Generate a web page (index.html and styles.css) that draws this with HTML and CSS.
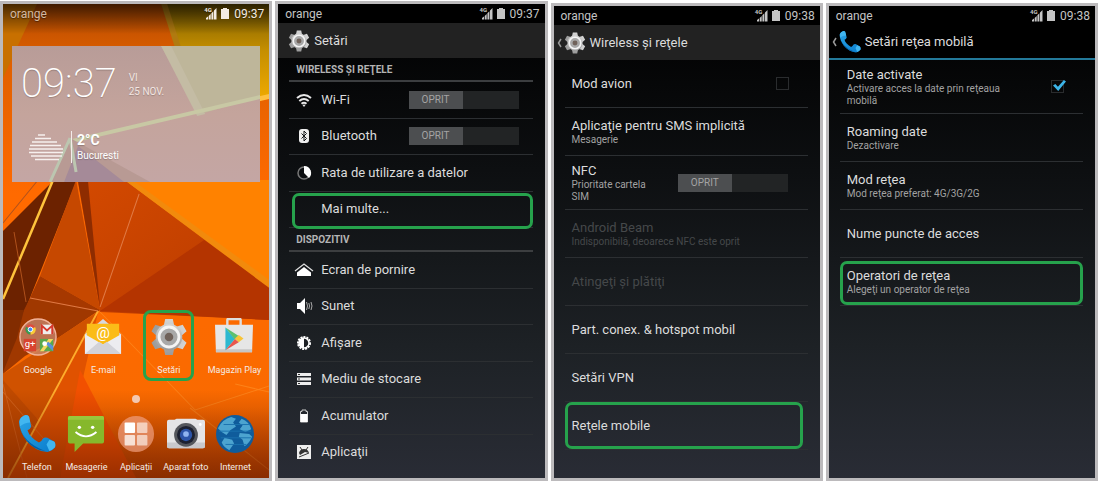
FILE: index.html
```html
<!DOCTYPE html>
<html lang="ro">
<head>
    <meta charset="UTF-8">
    <meta name="viewport" content="width=device-width, initial-scale=1.0">
    <title>Setări rețea mobilă</title>
    <link rel="stylesheet" href="styles.css">
</head>
<body>
    <!-- shared icons -->
    <svg class="defs" aria-hidden="true">
        <defs>
            <linearGradient id="metal" x1="0" y1="0" x2="0" y2="1">
                <stop offset="0" stop-color="#d4d4d4"/>
                <stop offset="1" stop-color="#9a9a9a"/>
            </linearGradient>
            <linearGradient id="blue" x1="0" y1="0" x2="1" y2="1">
                <stop offset="0" stop-color="#2ba4e6"/>
                <stop offset="1" stop-color="#0a7ccc"/>
            </linearGradient>
        </defs>
        <symbol id="signal" viewBox="0 0 13 13">
            <path d="M2 12.500V11L4 9.500v3zM4.700 12.500V9L6.700 7v5.500zM7.400 12.500V6.200l2-2v8.300zM10 12.500V3.600L12.500 1v11.500z" fill="currentColor"/>
        </symbol>
        <symbol id="battery" viewBox="0 0 8 11">
            <path d="M2 0h4v1h2v10H0V1h2z" fill="currentColor"/>
        </symbol>
        <symbol id="gear" viewBox="0 0 40 40">
            <g fill="url(#metal)">
                <path d="M14.500 8L16 1h8l1.500 7zM14.500 32l1.500 7h8l1.500-7z"/>
                <path d="M14.500 8L16 1h8l1.500 7zM14.500 32l1.500 7h8l1.500-7z" transform="rotate(60 20 20)"/>
                <path d="M14.500 8L16 1h8l1.500 7zM14.500 32l1.500 7h8l1.500-7z" transform="rotate(120 20 20)"/>
                <circle cx="20" cy="20" r="14"/>
            </g>
            <circle cx="20" cy="20" r="10.500" fill="#a8a8a8" stroke="#f4f4f4" stroke-width="3"/>
            <circle cx="20" cy="20" r="4.500" fill="#70625a"/>
        </symbol>
        <symbol id="phone" viewBox="0 0 40 40">
            <path d="M1 7Q2 2 8 0q4 0 4 4l2 8q-1 3-4 4 2 7 12 13 3-1 4-4 2-2 5-1l7 4q2 2 1 6-3 4-8 5Q18 38 9 27 2 18 1 7z" fill="url(#blue)"/>
            <path d="M2 5q2-4 6-5 4 0 4 4l1 4Q7 8 2 12zM38 28q2 2 1 6-3 3-6 4l-3-7 3-5z" fill="#42b6f0"/>
            <path d="M1 9q3 20 28 29-12-1-20-11Q2 18 1 9z" fill="#0560a8"/>
        </symbol>
        <symbol id="back" viewBox="0 0 5 10">
            <path d="M4 1L1.500 5 4 9" fill="none" stroke="#999" stroke-width="1.500"/>
        </symbol>
    </svg>

    <main class="phones">
        <section class="phone home">
            <svg class="wallpaper" viewBox="3 4 266 474" preserveAspectRatio="none" aria-hidden="true">
                <defs>
                    <linearGradient id="base" x1="0" y1="0" x2="0" y2="1">
                        <stop offset="0" stop-color="#b44a00"/>
                        <stop offset="0.120" stop-color="#e06000"/>
                        <stop offset="0.400" stop-color="#ff6a00"/>
                        <stop offset="0.850" stop-color="#fa6a00"/>
                        <stop offset="1" stop-color="#c44a00"/>
                    </linearGradient>
                    <linearGradient id="yellow" x1="0" y1="0" x2="0" y2="1">
                        <stop offset="0" stop-color="#7a5c00"/>
                        <stop offset="0.400" stop-color="#c48e00"/>
                        <stop offset="1" stop-color="#ffb400"/>
                    </linearGradient>
                    <linearGradient id="rust" x1="0" y1="0" x2="1" y2="1">
                        <stop offset="0" stop-color="#d44a00"/>
                        <stop offset="1" stop-color="#b83a00"/>
                    </linearGradient>
                    <linearGradient id="shade" x1="0" y1="0" x2="0" y2="1">
                        <stop offset="0" stop-color="#000" stop-opacity="0.650"/>
                        <stop offset="1" stop-color="#000" stop-opacity="0"/>
                    </linearGradient>
                    <linearGradient id="foot" x1="0" y1="0" x2="0" y2="1">
                        <stop offset="0" stop-color="#6a1c00" stop-opacity="0"/>
                        <stop offset="1" stop-color="#6a1c00" stop-opacity="0.650"/>
                    </linearGradient>
                </defs>
                <rect x="3" y="4" width="266" height="474" fill="url(#base)"/>
                <path d="M3 4h34L3 78z" fill="#c87000"/>
                <path d="M161 4h108v92l-69 22z" fill="url(#yellow)"/>
                <path d="M161 4l6 0 36 112-6 2z" fill="#b07a10"/>
                <path d="M269 94v5L66 146v-4z" fill="#ffc040"/>
                <path d="M100 180h169v110z" fill="#ff8200"/>
                <!-- dark facets -->
                <path d="M3 231L50 184 78 165 76 182 22 318H3z" fill="#6c2200"/>
                <path d="M76 170l50 11 143 106v33L100 312z" fill="url(#rust)"/>
                <path d="M204 240l65 47v33L100 311z" fill="#b43400"/>
                <path d="M76 180L40 276l60 34z" fill="#c64800"/>
                <path d="M40 276l60 34-3 2-67-14z" fill="#a63800"/>
                <path d="M77 176l11 6 12 126z" fill="#8e2c00"/>
                <path d="M123 179l8 0 138 101v8z" fill="#f28a0c"/>
                <path d="M30 298l68 13-43 29-30 16-22 18v-60l20-2z" fill="#a03800"/>
                <path d="M3 310l21 0-7 28-14 34z" fill="#822c00"/>
                <path d="M97 312L3 374v40l44 6z" fill="#d05200"/>
                <path d="M3 380l37 42-22 38L3 478z" fill="#c04a00"/>
                <path d="M98 312L60 478H8z" fill="#e05200"/>
                <path d="M80 370l56 108H60z" fill="#f25000"/>
                <g fill="none">
                    <path d="M53 180L3 299" stroke="#ffc43c" stroke-width="2.500"/>
                    <path d="M98 311L8 478" stroke="#ffad2c" stroke-width="1.800"/>
                    <path d="M139 194l-39 113M30 298l68 13" stroke="#e07a44"/>
                    <path d="M38 180L3 223M14 232l12 70" stroke="#b0521c"/>
                    <path d="M100 312l95 98 74-24M190 408l79 62M235 384l34 8" stroke="#ff9a30" stroke-opacity="0.500"/>
                    <path d="M3 384l24 94M3 392l40 46" stroke="#e27a34" stroke-opacity="0.500"/>
                </g>
                <rect x="3" y="4" width="266" height="30" fill="url(#shade)"/>
                <rect x="3" y="390" width="266" height="88" fill="url(#foot)"/>
            </svg>

            <div class="status">
                <span class="carrier">orange</span>
                <span class="network"><svg class="signal"><use href="#signal"/></svg><span>4G</span></span>
                <svg class="battery"><use href="#battery"/></svg>
                <span>09:37</span>
            </div>

            <div class="widget">
                <svg class="facets" viewBox="0 0 248 136" preserveAspectRatio="none" aria-hidden="true">
                    <path d="M149 0h99v51l-60 17z" fill="#beb69a"/>
                    <path d="M149 0l10 0 34 68-8 2z" fill="#c4bca4"/>
                    <path d="M248 49v4L60 97v-4z" fill="#c8c8a4"/>
                    <path d="M58 92l80 44H38z" fill="#b89a94"/>
                    <path d="M66 100l46 36H52z" fill="#a58a98"/>
                    <path d="M58 92L38 136M58 92l6 34" stroke="#bcc6b0" stroke-width="3" fill="none"/>
                </svg>
                <div class="clock">
                    <span class="time">09:37</span>
                    <span class="date">VI<br>25 NOV.</span>
                </div>
                <div class="weather">
                    <svg class="cloud" viewBox="0 0 34 28" aria-hidden="true">
                        <path d="M9 2h7M6 5.500h16M3 9h25M1 12.500h31M0 16h34M0 19.500h34M2 23h31M6 26.500h24" stroke="#f6f0ee" stroke-width="1.500"/>
                    </svg>
                    <div class="place"><strong>2°C</strong><span>Bucuresti</span></div>
                </div>
            </div>

            <div class="apps">
                <button class="app">
                    <svg viewBox="0 0 40 40">
                        <circle cx="20" cy="20" r="19" fill="#c98c74" fill-opacity="0.700" stroke="#f2b298" stroke-width="1.500"/>
                        <circle cx="12" cy="12" r="5.500" fill="#e04a3c"/>
                        <path d="M12 12l5-2.500a5.500 5.500 0 0 1-5 8z" fill="#f8cc38"/>
                        <path d="M12 12v5.500a5.500 5.500 0 0 1-4.500-8.500z" fill="#3c9c50"/>
                        <circle cx="12" cy="12" r="2.400" fill="#4285f4" stroke="#fff"/>
                        <path d="M23 7h13v10H23z" fill="#eee"/>
                        <path d="M24 17V8l5.500 5L35 8v9" fill="none" stroke="#d8382c" stroke-width="2"/>
                        <path d="M5 22h13v13H5z" fill="#d8432f"/>
                        <text x="6" y="31" font-size="10" fill="#fff">g+</text>
                        <path d="M22 22h14v13H22z" fill="#58a84c"/>
                        <path d="M22 35l9-13h5L26 35z" fill="#f4d860"/>
                        <path d="M28 27l8 8v-5l-5-5z" fill="#5a90d8"/>
                        <circle cx="27" cy="27" r="2.500" fill="#fff"/>
                    </svg>
                    <span>Google</span>
                </button>
                <button class="app">
                    <svg viewBox="0 0 40 40">
                        <path d="M1 17L20 1l19 16v21H1z" fill="#d8d8dc"/>
                        <path d="M3 6h34v18L20 32 3 24z" fill="#fbbc18"/>
                        <text x="20" y="21" font-size="16" font-weight="400" text-anchor="middle" fill="#fff">@</text>
                        <path d="M1 17l19 11 19-11v21H1z" fill="#ececf0"/>
                        <path d="M1 38l15-13 4 3 4-3 15 13z" fill="#d2d2d8"/>
                    </svg>
                    <span>E-mail</span>
                </button>
                <button class="app marked">
                    <svg viewBox="0 0 40 40"><use href="#gear"/></svg>
                    <span>Setări</span>
                </button>
                <button class="app">
                    <svg viewBox="0 0 40 40">
                        <path d="M13 8V2q0-1 1-1h12q1 0 1 1v6" fill="none" stroke="#dedede" stroke-width="2.500"/>
                        <path d="M0 7h40l-1 29H1z" fill="#e6e6e6"/>
                        <path d="M1 33h38v3H1z" fill="#c6c6c6"/>
                        <path d="M11 10v24l10-12z" fill="#2cb8d0"/>
                        <path d="M11 10l14 9-4 4z" fill="#5cc070"/>
                        <path d="M25 18l5 3.500-5 4-4-4z" fill="#f8c438"/>
                        <path d="M11 34l10-12 4 3.500z" fill="#e8564c"/>
                    </svg>
                    <span>Magazin Play</span>
                </button>
            </div>

            <div class="page-dot"></div>

            <div class="apps dock">
                <button class="app">
                    <svg viewBox="0 0 40 40"><use href="#phone"/></svg>
                    <span>Telefon</span>
                </button>
                <button class="app">
                    <svg viewBox="0 0 40 40">
                        <path d="M3 1h34q2 0 2 2v25q0 2-2 2H17L8 39V30H3q-2 0-2-2V3q0-2 2-2z" fill="#86b82c"/>
                        <path d="M3 1h34q2 0 2 2v2H1V3q0-2 2-2z" fill="#98c83c"/>
                        <circle cx="13" cy="13" r="1.800" fill="#fff"/>
                        <circle cx="27" cy="13" r="1.800" fill="#fff"/>
                        <path d="M9 18q11 9 22 0" fill="none" stroke="#fff" stroke-width="2"/>
                    </svg>
                    <span>Mesagerie</span>
                </button>
                <button class="app">
                    <svg viewBox="0 0 40 40">
                        <circle cx="20" cy="20" r="19" fill="#f0a080" fill-opacity="0.700"/>
                        <rect x="8" y="8" width="11" height="11" rx="1" fill="#fff"/>
                        <rect x="21" y="8" width="11" height="11" rx="1" fill="#fff" fill-opacity="0.600"/>
                        <rect x="8" y="21" width="11" height="11" rx="1" fill="#fff" fill-opacity="0.750"/>
                        <rect x="21" y="21" width="11" height="11" rx="1" fill="#fff" fill-opacity="0.600"/>
                    </svg>
                    <span>Aplicații</span>
                </button>
                <button class="app">
                    <svg viewBox="0 0 40 40">
                        <path d="M2 5h6l2-1h20l2 1h6q2 0 2 2v26q0 2-2 2H2q-2 0-2-2V7q0-2 2-2z" fill="#e4e4e6"/>
                        <path d="M0 29h40v4q0 2-2 2H2q-2 0-2-2z" fill="#c8c8cc"/>
                        <circle cx="20" cy="21" r="12.500" fill="#54565c"/>
                        <circle cx="20" cy="21" r="9.500" fill="#1c2030"/>
                        <circle cx="20" cy="21" r="6.500" fill="#2c54a8"/>
                        <circle cx="20" cy="20" r="3" fill="#90b4f0"/>
                        <circle cx="35" cy="10" r="1.500" fill="#fff"/>
                    </svg>
                    <span>Aparat foto</span>
                </button>
                <button class="app">
                    <svg viewBox="0 0 40 40">
                        <circle cx="20" cy="20" r="20" fill="#0f5c9c"/>
                        <path d="M2 14Q7 4 16 2l5 2-3 4 3 4-6 4-4 5-5-3zM27 4q8 3 10 11l-6 3-6-3 3-4-4-3zM9 24l8 2 2 4-5 7Q8 34 6 29zM25 19l10 1 3 3q-3 7-8 10l-2-7-4-3z" fill="#4ca4d0"/>
                        <path d="M3 17h34M5 24h32M8 10h28M10 31h22" stroke="#1a72ae" stroke-width="1"/>
                    </svg>
                    <span>Internet</span>
                </button>
            </div>
        </section>

        <section class="phone">
            <div class="status">
                <span class="carrier">orange</span>
                <span class="network"><svg class="signal"><use href="#signal"/></svg><span>4G</span></span>
                <svg class="battery"><use href="#battery"/></svg>
                <span>09:37</span>
            </div>
            <header class="title-bar">
                <svg class="title-icon"><use href="#gear"/></svg>
                <h1>Setări</h1>
            </header>
            <div class="list compact">
                <h2>WIRELESS ŞI REŢELE</h2>
                <div class="row">
                    <svg class="icon" viewBox="0 0 20 20"><path d="M3 8q7-6 14 0M5.300 11q4.700-4 9.400 0M7.500 13.700q2.500-2 5 0" fill="none" stroke="#e8e8e8" stroke-width="2"/><path d="M8.500 15q1.500-1 3 0L10 17z" fill="#e8e8e8"/></svg>
                    <span class="name" id="wifi">Wi-Fi</span>
                    <button class="switch" role="switch" aria-checked="false" aria-labelledby="wifi"><span>OPRIT</span></button>
                </div>
                <div class="row">
                    <svg class="icon" viewBox="0 0 20 20"><rect x="5" y="3" width="10" height="14" rx="3" fill="#eee"/><path d="M7.500 7.500l5 5L10 15V5l2.500 2.500-5 5" fill="none" stroke="#15181a"/></svg>
                    <span class="name" id="bluetooth">Bluetooth</span>
                    <button class="switch" role="switch" aria-checked="false" aria-labelledby="bluetooth"><span>OPRIT</span></button>
                </div>
                <a class="row" href="#">
                    <svg class="icon" viewBox="0 0 20 20"><circle cx="10" cy="10" r="6" fill="none" stroke="#777" stroke-width="1.500"/><path d="M10 3a7 7 0 0 1 5 12l-5-5z" fill="#fff"/></svg>
                    <span class="name">Rata de utilizare a datelor</span>
                </a>
                <a class="row marked-row" href="#">
                    <span class="icon"></span>
                    <span class="name">Mai multe...</span>
                </a>
                <h2>DISPOZITIV</h2>
                <a class="row" href="#">
                    <svg class="icon" viewBox="0 0 20 20"><path d="M1 11l9-7 9 7" fill="none" stroke="#ddd" stroke-width="1.300"/><path d="M10 7l7 5.500V16H3v-3.500z" fill="#fff"/></svg>
                    <span class="name">Ecran de pornire</span>
                </a>
                <a class="row" href="#">
                    <svg class="icon" viewBox="0 0 20 20"><path d="M3 7h3l5-5v16l-5-5H3z" fill="#fff"/><path d="M12.500 6q2 4 0 8M14.800 7q1.500 3 0 6M17 6q2 4 0 8" fill="none" stroke="#aaa"/></svg>
                    <span class="name">Sunet</span>
                </a>
                <a class="row" href="#">
                    <svg class="icon" viewBox="0 0 20 20"><circle cx="10" cy="10" r="6" fill="none" stroke="#fff" stroke-width="2" stroke-dasharray="2 1"/><circle cx="10" cy="10" r="5" fill="none" stroke="#fff" stroke-width="1.500"/><path d="M10 5a5 5 0 0 0 0 10z" fill="#fff"/></svg>
                    <span class="name">Afişare</span>
                </a>
                <a class="row" href="#">
                    <svg class="icon" viewBox="0 0 20 20"><path d="M3 4h14v3H3zM3 8.500h14v3H3zM3 13h14v3H3z" fill="#eee"/><path d="M4 5.500h2M4 10h2M4 14.500h2" stroke="#333"/></svg>
                    <span class="name">Mediu de stocare</span>
                </a>
                <a class="row" href="#">
                    <svg class="icon" viewBox="0 0 20 20"><path d="M8 4h4v1.500h1.500V16h-7V5.500H8z" fill="none" stroke="#ccc"/><path d="M6.500 8h7v8h-7z" fill="#fff"/></svg>
                    <span class="name">Acumulator</span>
                </a>
                <a class="row" href="#">
                    <svg class="icon" viewBox="0 0 20 20"><rect x="3" y="3" width="14" height="14" fill="#eee"/><path d="M5 11q1-4 5-4 4 0 5 4l-4-1-5 3z" fill="#333"/><path d="M5 15l10-4M6 5l2 3M14 5l-2 3" stroke="#333"/></svg>
                    <span class="name">Aplicaţii</span>
                </a>
            </div>
        </section>

        <section class="phone lower">
            <div class="status">
                <span class="carrier">orange</span>
                <span class="network"><svg class="signal"><use href="#signal"/></svg><span>4G</span></span>
                <svg class="battery"><use href="#battery"/></svg>
                <span>09:38</span>
            </div>
            <header class="title-bar">
                <svg class="back"><use href="#back"/></svg>
                <svg class="title-icon"><use href="#gear"/></svg>
                <h1>Wireless şi reţele</h1>
            </header>
            <div class="list">
                <div class="row">
                    <label class="name" for="airplane">Mod avion</label>
                    <input class="tick" type="checkbox" id="airplane">
                </div>
                <a class="row" href="#">
                    <span class="name">Aplicaţie pentru SMS implicită<small>Mesagerie</small></span>
                </a>
                <div class="row tall">
                    <span class="name narrow" id="nfc">NFC<small>Prioritate cartela SIM</small></span>
                    <button class="switch" role="switch" aria-checked="false" aria-labelledby="nfc"><span>OPRIT</span></button>
                </div>
                <div class="row disabled">
                    <span class="name">Android Beam<small>Indisponibilă, deoarece NFC este oprit</small></span>
                </div>
                <div class="row disabled"><span class="name">Atingeţi şi plătiţi</span></div>
                <a class="row" href="#"><span class="name">Part. conex. &amp; hotspot mobil</span></a>
                <a class="row" href="#"><span class="name">Setări VPN</span></a>
                <a class="row marked-row inset-right" href="#"><span class="name">Reţele mobile</span></a>
            </div>
        </section>

        <section class="phone lower">
            <div class="status">
                <span class="carrier">orange</span>
                <span class="network"><svg class="signal"><use href="#signal"/></svg><span>4G</span></span>
                <svg class="battery"><use href="#battery"/></svg>
                <span>09:38</span>
            </div>
            <header class="title-bar accent">
                <svg class="back"><use href="#back"/></svg>
                <svg class="title-icon"><use href="#phone"/></svg>
                <h1>Setări reţea mobilă</h1>
            </header>
            <div class="list">
                <div class="row tall">
                    <label class="name medium" for="data">Date activate<small>Activare acces la date prin reţeaua mobilă</small></label>
                    <input class="tick" type="checkbox" id="data" checked>
                </div>
                <a class="row" href="#"><span class="name">Roaming date<small>Dezactivare</small></span></a>
                <a class="row" href="#"><span class="name">Mod reţea<small>Mod reţea preferat: 4G/3G/2G</small></span></a>
                <a class="row" href="#"><span class="name">Nume puncte de acces</span></a>
                <a class="row marked-row inset-top" href="#"><span class="name">Operatori de reţea<small>Alegeţi un operator de reţea</small></span></a>
            </div>
        </section>
    </main>
</body>
</html>
```

FILE: styles.css
```css
* {
    box-sizing: border-box;
}

body {
    margin: 0;
    background: #fff;
    font-family: Roboto, "Liberation Sans", sans-serif;
    color: #dcdcdc;
}

button {
    font-family: inherit;
    border: none;
    background: none;
    padding: 0;
    color: inherit;
}

a {
    color: inherit;
    text-decoration: none;
}

.defs {
    position: absolute;
    width: 0;
    height: 0;
}

.phones {
    display: grid;
    grid-template-columns: repeat(4, minmax(0, 1fr));
    gap: 3px;
    min-height: 100vh;
    padding: 1px 2px 4px 0;
}

.phone {
    display: flex;
    flex-direction: column;
    border: 3px solid #bcbabc;
    background: linear-gradient(#000, #0d0f11 35%, #1d2125 72%, #292c35);
}

.lower {
    margin-top: 2px;
}

/* status bar */
.status {
    display: flex;
    align-items: center;
    height: 19px;
    padding: 0 5px 0 7px;
    font-size: 12px;
    line-height: 16px;
    color: #c4c4c4;
    background: #000;
}

.carrier {
    flex: 1;
}

.network {
    position: relative;
    width: 13px;
    height: 13px;
    margin-right: 4px;
}

.network span {
    position: absolute;
    left: 0;
    top: 0;
    font-size: 6px;
    font-weight: 700;
    line-height: 6px;
}

.signal {
    display: block;
    width: 13px;
    height: 13px;
}

.battery {
    width: 8px;
    height: 11px;
    margin-right: 5px;
}

/* title bar */
.title-bar {
    position: relative;
    display: flex;
    align-items: center;
    gap: 4px;
    height: 35px;
    padding-left: 10px;
    background: #222;
}

.accent {
    background: #000;
    border-bottom: 2px solid #23799a;
}

.title-icon {
    width: 22px;
    height: 22px;
}

.back {
    position: absolute;
    left: 3px;
    width: 5px;
    height: 10px;
}

h1 {
    margin: 0;
    font-size: 13px;
    font-weight: 400;
    line-height: 18px;
}

/* settings lists */
.list {
    flex: 1;
    display: flex;
    flex-direction: column;
    padding: 0 12px 7px 11px;
}

h2 {
    margin: 0;
    padding: 6px 6px 4px 7px;
    border-bottom: 2px solid #3c3e40;
    font-size: 10px;
    font-weight: 700;
    line-height: 12px;
    color: #b4b4b4;
}

.row {
    position: relative;
    display: flex;
    align-items: center;
    min-height: 48px;
    padding: 0 6px 0 7px;
    border-bottom: 1px solid #2c2f32;
}

.tall {
    min-height: 54px;
}

.compact .row {
    flex: 1;
    min-height: 36px;
    padding-left: 5px;
}

.compact .row:last-child {
    border-bottom-color: transparent;
}

.icon {
    width: 20px;
    height: 20px;
    margin-right: 7px;
}

.name {
    flex: 1;
    font-size: 13px;
    line-height: 16px;
}

.name small {
    display: block;
    font-size: 10px;
    line-height: 12px;
    color: #a2a2a2;
}

.narrow {
    flex: 0 1 80px;
    margin-right: auto;
}

.medium {
    flex: 0 1 170px;
    margin-right: auto;
}

.disabled,
.disabled .name small {
    color: #45484a;
}

.switch {
    width: 110px;
    height: 18px;
    margin-right: 14px;
    background: #222425;
    text-align: left;
}

.compact .switch {
    margin-right: 8px;
}

.switch span {
    display: block;
    width: 54px;
    background: #4c4e50;
    font-size: 10px;
    line-height: 18px;
    text-align: center;
    color: #a4a4a4;
}

.tick {
    position: relative;
    appearance: none;
    width: 13px;
    height: 13px;
    margin: 0 13px 0 0;
    border: 1px solid #2a2c2e;
}

.tick:checked::after {
    content: "";
    position: absolute;
    inset: -1px -3px 1px 1px;
    background: #3cb4e8;
    clip-path: polygon(0 50%, 18% 36%, 38% 62%, 84% 0, 100% 14%, 40% 100%);
}

/* green frame round the item to tap */
.marked-row::after {
    content: "";
    position: absolute;
    inset: 1px 0 -2px 3px;
    border: 3px solid #26a24c;
    border-radius: 7px;
}

.inset-right::after {
    inset: 0 5px 0 0;
}

.inset-top::after {
    inset: 3px 0 0 0;
}

/* home screen */
.home {
    position: relative;
    isolation: isolate;
    text-shadow: 0 1px 1px rgba(0, 0, 0, 0.4);
}

.wallpaper {
    position: absolute;
    inset: 0;
    z-index: -1;
    width: 100%;
    height: 100%;
}

.home .status {
    background: none;
    color: #f4ece4;
}

.home .carrier {
    color: #d4b8a0;
}

.widget {
    position: relative;
    isolation: isolate;
    margin: 23px 9px auto;
    height: 136px;
    padding: 17px 9px 0;
    background: linear-gradient(#b89c98, #c4a49c 50%, #c4a6a4);
    color: #fff;
    text-shadow: 0 1px 1px rgba(0, 0, 0, 0.2);
}

.facets {
    position: absolute;
    inset: 0;
    z-index: -1;
    width: 100%;
    height: 100%;
}

.clock,
.weather {
    display: flex;
    align-items: center;
}

.clock {
    gap: 12px;
}

.time {
    font-size: 40px;
    font-weight: 200;
    line-height: 42px;
}

.date {
    padding-top: 2px;
    font-size: 10px;
    line-height: 14px;
    color: #f2e6e2;
}

.weather {
    margin-top: 26px;
    padding-left: 8px;
    gap: 8px;
}

.cloud {
    width: 34px;
    height: 28px;
}

.place {
    display: flex;
    flex-direction: column;
    padding-left: 5px;
    border-left: 1px solid #f4ecea;
    font-size: 10px;
    line-height: 14px;
}

.place strong {
    font-size: 14px;
    line-height: 18px;
}

.apps {
    display: grid;
    grid-template-columns: repeat(4, minmax(0, 1fr));
    justify-items: center;
    padding: 0 2px;
}

.app {
    display: flex;
    flex-direction: column;
    align-items: center;
    gap: 8px;
    width: 51px;
    height: 71px;
    padding-top: 5px;
    border: 3px solid transparent;
    border-radius: 8px;
    font-size: 9px;
    line-height: 12px;
    white-space: nowrap;
    color: #f4ece6;
}

.app svg {
    flex: none;
    width: 38px;
    height: 38px;
}

.marked {
    border-color: #26a24c;
}

.page-dot {
    align-self: center;
    width: 8px;
    height: 8px;
    margin: 14px 0 4px;
    border-radius: 50%;
    background: #f4c8b0;
}

.dock {
    grid-template-columns: repeat(5, minmax(0, 1fr));
    padding: 0 9px;
}
```
